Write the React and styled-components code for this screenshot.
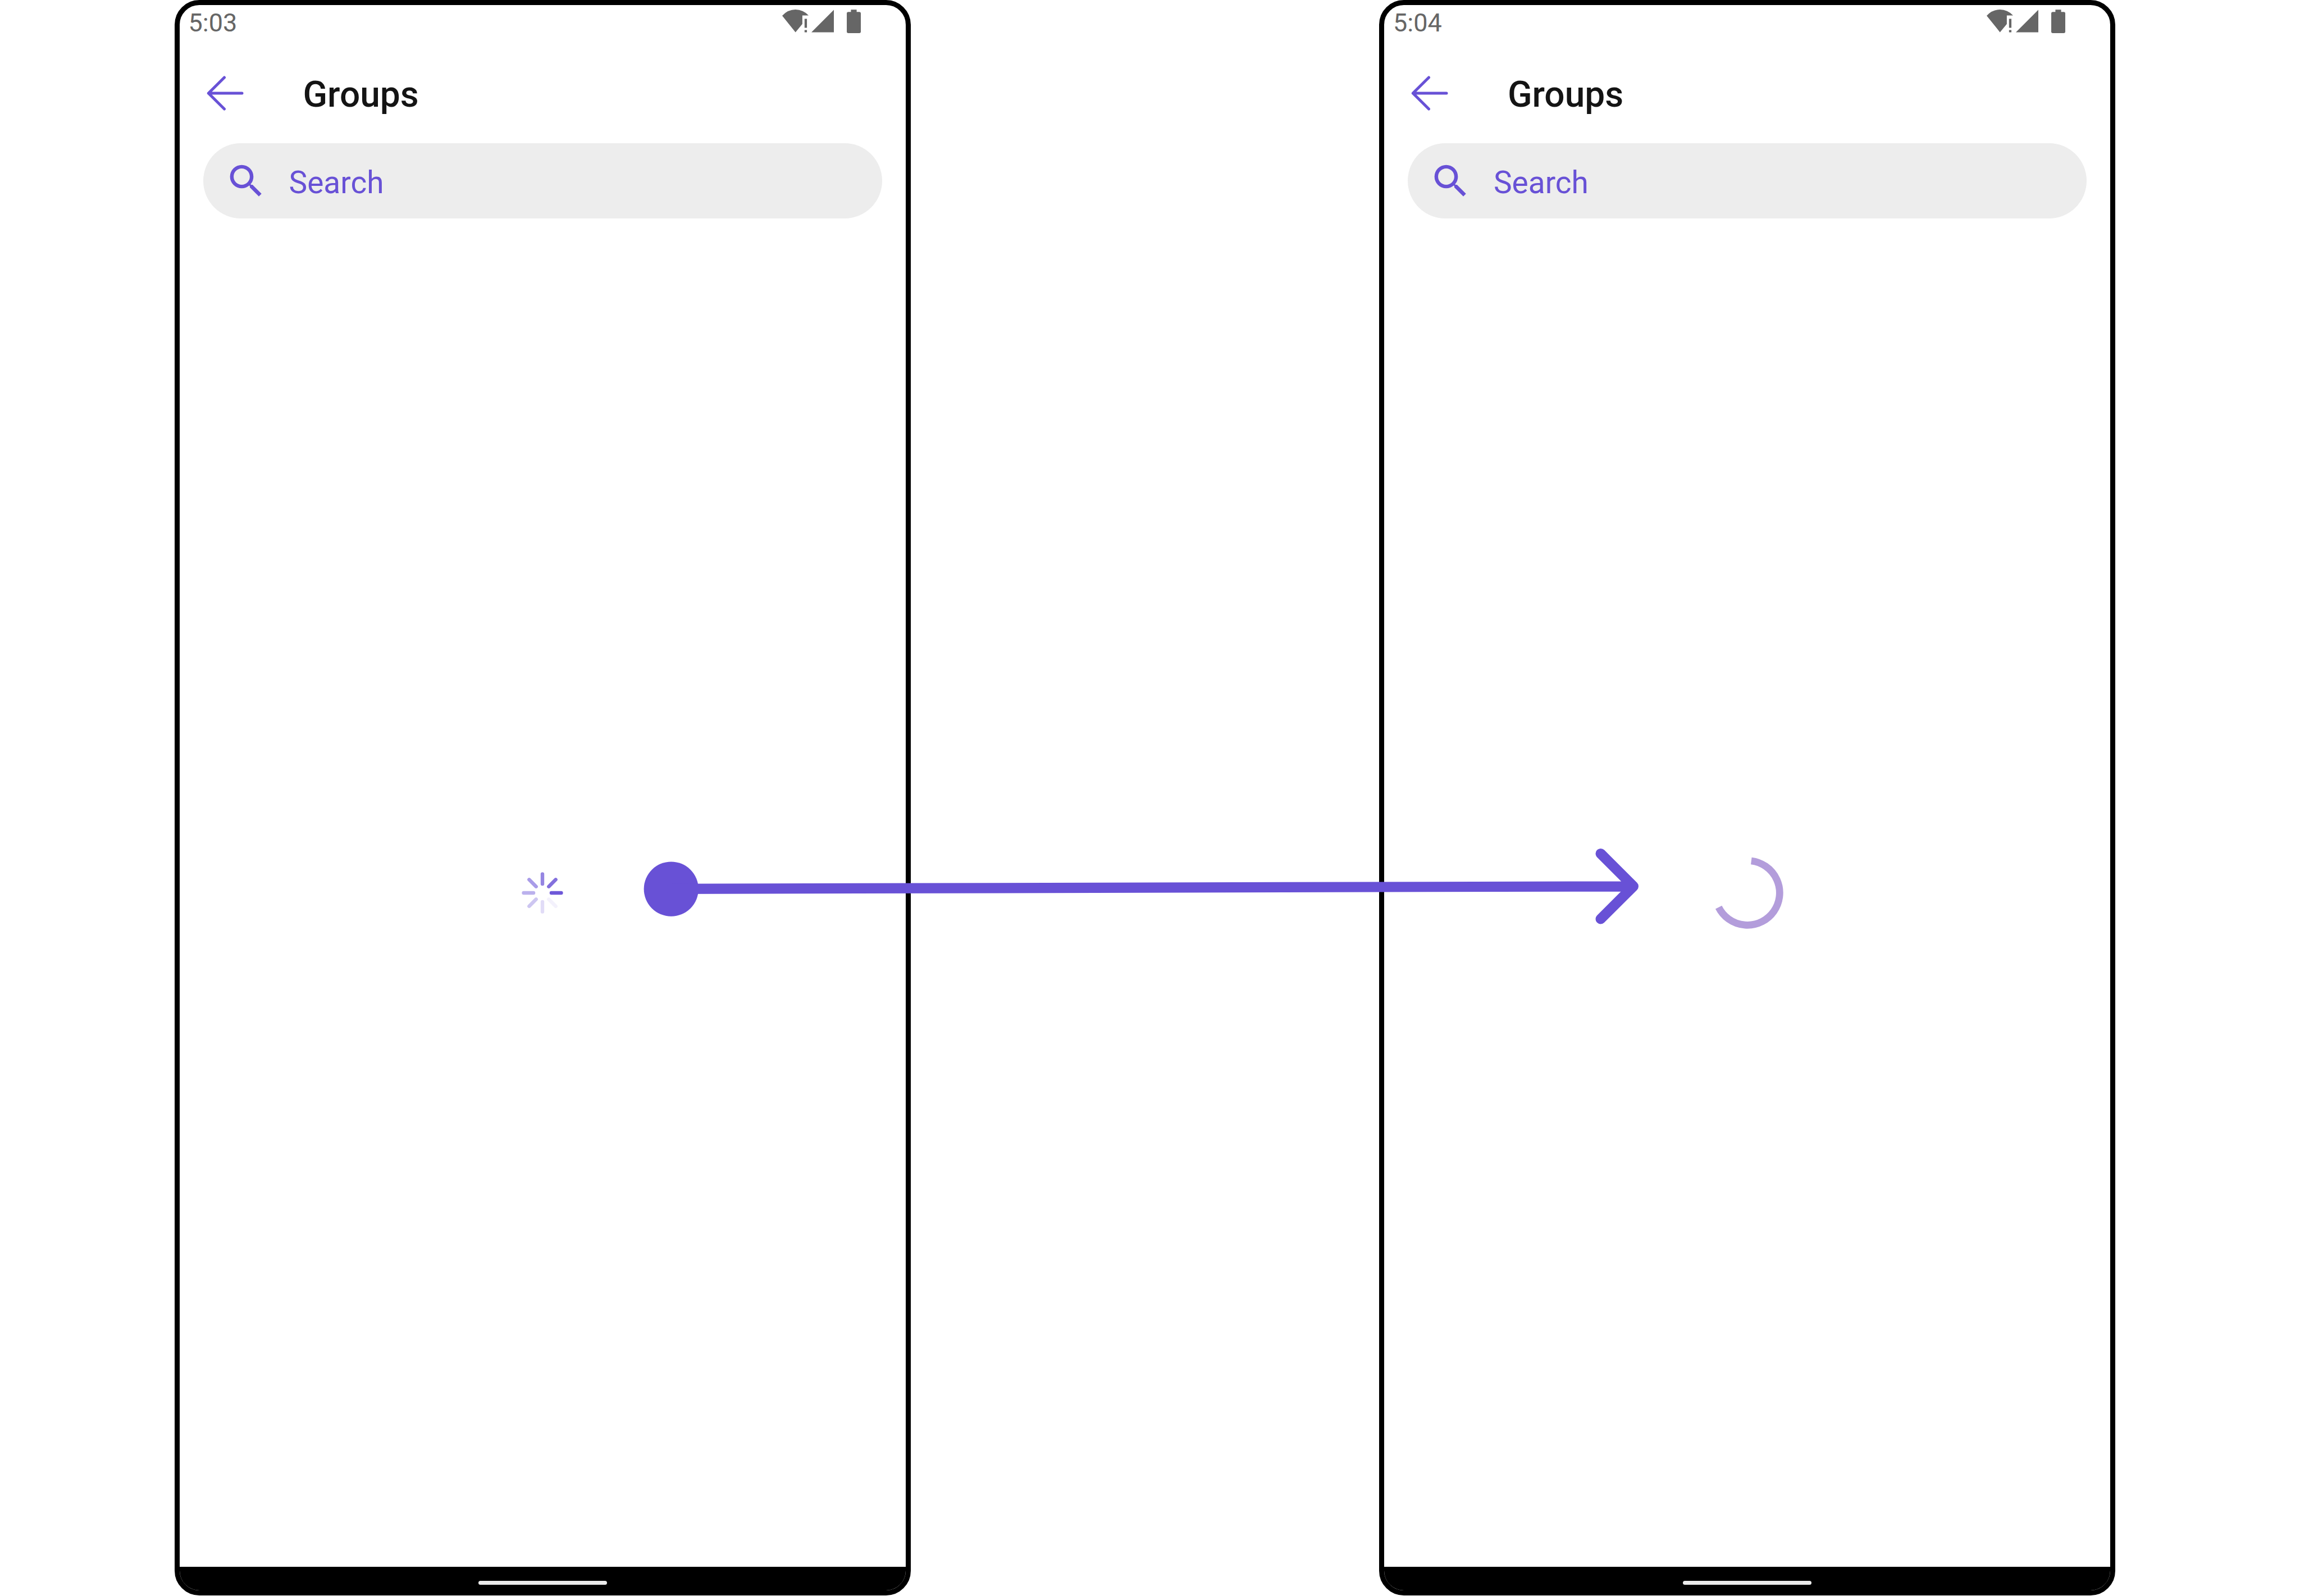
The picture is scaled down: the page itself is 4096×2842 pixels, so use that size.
import React from "react";
import styled, { createGlobalStyle } from "styled-components";

const accent = "#6851d6";
const statusGrey = "#666666";

const GlobalStyle = createGlobalStyle`
  *, *::before, *::after { box-sizing: border-box; }
  body {
    margin: 0;
    background: #ffffff;
    font-family: Roboto, "Noto Sans", sans-serif;
  }
`;

const Board = styled.main`
  position: relative;
  display: grid;
  grid-template-columns: 341fr 1440fr 916fr 1440fr 361fr;
  min-height: 100vh;
  padding-bottom: 1px;
  overflow: hidden;
`;

const Phone = styled.section`
  grid-column: ${({ $column }) => $column};
  display: flex;
  flex-direction: column;
  min-width: 0;
  overflow: hidden;
  border: 9px solid #000000;
  border-radius: 44px;
  background: #ffffff;
`;

const StatusBar = styled.div`
  display: flex;
  align-items: flex-start;
  justify-content: space-between;
  padding: 8px 80px 0 16px;
`;

const Time = styled.time`
  color: ${statusGrey};
  font-size: 45px;
  line-height: 48px;
`;

const StatusIcons = styled.div`
  display: flex;
  color: ${statusGrey};

  svg { display: block; }
  svg + svg { margin-left: 5px; }
  svg:last-child { margin-left: 23px; }
`;

const Header = styled.header`
  display: flex;
  align-items: center;
  gap: 106px;
  padding: 64px 48px 48px;
`;

const BackButton = styled.button`
  display: flex;
  padding: 0;
  border: 0;
  background: none;
  color: ${accent};
  cursor: pointer;
`;

const Title = styled.h1`
  margin: 0;
  padding-top: 2px;
  color: #141414;
  font-size: 64px;
  font-weight: 500;
  line-height: 76px;
`;

const SearchBar = styled.label`
  display: flex;
  align-items: center;
  gap: 38px;
  height: 134px;
  margin: 0 42px;
  padding: 0 38px;
  border-radius: 67px;
  background: #ededed;
  color: ${accent};

  svg { flex: none; }
`;

const SearchInput = styled.input`
  flex: 1;
  min-width: 0;
  padding: 6px 0 0;
  border: 0;
  outline: 0;
  background: none;
  color: inherit;
  font-family: inherit;
  font-size: 55px;
  line-height: 64px;

  &::placeholder { color: inherit; opacity: 1; }
`;

const Content = styled.div`
  flex: 1;
  display: flex;
  align-items: center;
  justify-content: center;
`;

const NavigationBar = styled.div`
  display: flex;
  justify-content: center;
  height: 42px;
  padding-top: 25px;
  background: #000000;
`;

const HomeIndicator = styled.span`
  width: 229px;
  height: 7px;
  border-radius: 4px;
  background: #ebebeb;
`;

/* Flow arrow lying over both phones, tied to the board's proportions. */
const FlowArrow = styled.svg`
  position: absolute;
  left: calc(100% * 1259 / 4498);
  top: calc(100% * 1658 / 3121);
  width: calc(100% * 1947 / 4498);
  color: ${accent};
  pointer-events: none;
`;

const WifiAlertIcon = () => (
  <svg width="47" height="41" viewBox="0 0 51.6 45" fill="currentColor" aria-hidden="true">
    <path d="M0 12Q11 0 26 0Q41 0 51.6 11.6H39.4V28.3L26 44.4Z" />
    <path d="M43.7 18H48.4V35.7H43.7ZM43.7 40H48.4V44.4H43.7Z" />
  </svg>
);

const SignalIcon = () => (
  <svg width="40" height="41" viewBox="0 0 44 45" fill="currentColor" aria-hidden="true">
    <path d="M44 .6V44.4H0Z" />
  </svg>
);

const BatteryIcon = () => (
  <svg width="25" height="42" viewBox="0 0 27 45.4" fill="currentColor" aria-hidden="true">
    <rect x="8" y=".2" width="11" height="7" />
    <rect y="4.7" width="27" height="40.7" rx="3" />
  </svg>
);

const BackIcon = () => (
  <svg
    width="66"
    height="66"
    viewBox="0 0 66 66"
    fill="none"
    stroke="currentColor"
    strokeWidth="5"
    strokeLinecap="round"
    strokeLinejoin="round"
    aria-hidden="true"
  >
    <path d="M31.5 3L3.3 31L31.5 59M3.3 31H63" />
  </svg>
);

const SearchIcon = () => (
  <svg width="77" height="77" viewBox="0 0 24 24" fill="currentColor" aria-hidden="true">
    <path d="M15.5 14h-.79l-.28-.27A6.471 6.471 0 0 0 16 9.5 6.5 6.5 0 1 0 9.5 16c1.61 0 3.09-.59 4.23-1.57l.27.28v.79l5 4.99L20.49 19l-4.99-5zm-6 0C7.01 14 5 11.99 5 9.5S7.01 5 9.5 5 14 7.01 14 9.5 11.99 14 9.5 14z" />
  </svg>
);

const spokeOpacities = [0.96, 0.08, 0.2, 0.33, 0.45, 0.57, 0.7, 0.82];

const SpokeSpinner = () => (
  <svg width="74" height="74" viewBox="-40.6 -40.6 81.2 81.2" role="img" aria-label="Loading">
    {spokeOpacities.map((opacity, i) => (
      <line
        key={i}
        x1="17.5"
        x2="36.7"
        stroke={accent}
        strokeWidth="7"
        strokeLinecap="round"
        strokeOpacity={opacity}
        transform={`rotate(${i * 45})`}
      />
    ))}
  </svg>
);

const RingSpinner = () => (
  <svg width="128" height="128" viewBox="-70.3 -70.3 140.6 140.6" role="img" aria-label="Loading">
    <path d="M7.5 -62.6A63 63 0 1 1 -56.4 28.1" fill="none" stroke="#b39ddb" strokeWidth="14" />
  </svg>
);

function GroupsScreen({ column, time, children }) {
  return (
    <Phone $column={column}>
      <StatusBar>
        <Time>{time}</Time>
        <StatusIcons>
          <WifiAlertIcon />
          <SignalIcon />
          <BatteryIcon />
        </StatusIcons>
      </StatusBar>
      <Header>
        <BackButton type="button" aria-label="Back">
          <BackIcon />
        </BackButton>
        <Title>Groups</Title>
      </Header>
      <SearchBar>
        <SearchIcon />
        <SearchInput type="text" placeholder="Search" aria-label="Search" />
      </SearchBar>
      <Content>{children}</Content>
      <NavigationBar>
        <HomeIndicator />
      </NavigationBar>
    </Phone>
  );
}

export default function App() {
  return (
    <>
      <GlobalStyle />
      <Board>
        <GroupsScreen column={2} time="5:03">
          <SpokeSpinner />
        </GroupsScreen>
        <GroupsScreen column={4} time="5:04">
          <RingSpinner />
        </GroupsScreen>
        <FlowArrow viewBox="1259 1658 1947 150" aria-hidden="true">
          <circle cx="1313" cy="1738.2" r="53.4" fill="currentColor" />
          <path
            d="M1313 1738L3195 1733M3131 1669L3195 1733L3131 1796.8"
            fill="none"
            stroke="currentColor"
            strokeWidth="20"
            strokeLinecap="round"
            strokeLinejoin="round"
          />
        </FlowArrow>
      </Board>
    </>
  );
}
